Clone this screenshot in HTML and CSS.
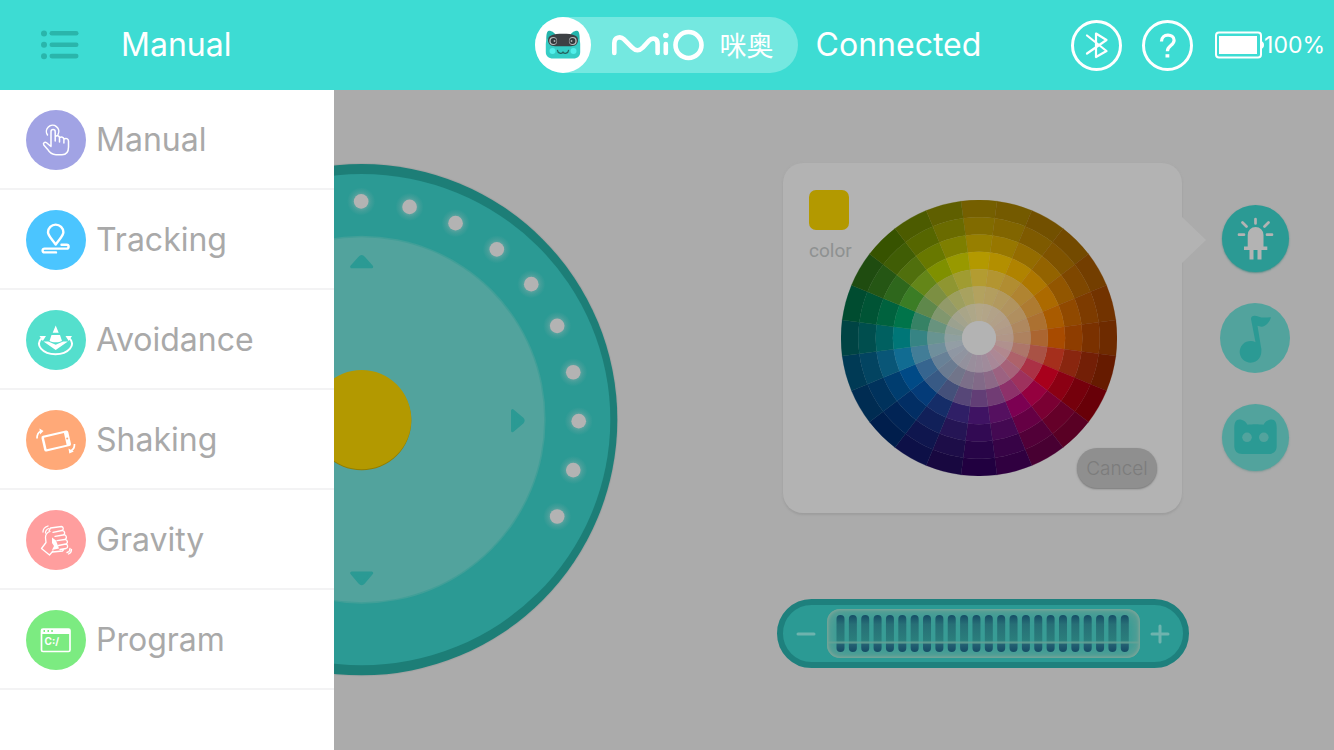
FILE: index.html
```html
<!DOCTYPE html>
<html lang="en">
<head>
<meta charset="utf-8">
<meta name="viewport" content="width=device-width, initial-scale=1">
<title>MiO Manual</title>
<link rel="stylesheet" href="styles.css">
</head>
<body>
<header class="topbar">
  <div class="topbar-left">
    <button class="icon-btn menu-btn" type="button" aria-label="Menu">
      <svg width="38" height="30" viewBox="0 0 38 30"><g fill="#2ab5ab"><circle cx="3" cy="3.500" r="3"/><circle cx="3" cy="14.800" r="3"/><circle cx="3" cy="26.200" r="3"/><rect x="8.500" y="1" width="29" height="4.600" rx="2.300"/><rect x="8.500" y="12.400" width="29" height="4.600" rx="2.300"/><rect x="8.500" y="23.800" width="29" height="4.600" rx="2.300"/></g></svg>
    </button>
    <h1 class="title">Manual</h1>
  </div>
  <div class="brand">
    <span class="brand-face">
      <svg width="36" height="30" viewBox="0 0 36 30">
        <path d="M1.500 13C1 6 1.500 1 4 .8 7 .8 10 3 11 6ZM34.500 13C35 6 34.500 1 32 .8 29 .8 26 3 25 6Z" fill="#25b5ac"/>
        <path d="M.8 14C.8 9 4 6.500 9 6.500h18c5 0 8.200 2.500 8.200 7.500v8c0 4-2.500 6.500-7 6.500H8C3.500 28.500.8 26 .8 22Z" fill="#35cdc5"/>
        <path d="M3 10C3 5.500 8 3.800 18 3.800S33 5.500 33 10s-3 6.200-7 6.200H10C6 16.200 3 14.500 3 10Z" fill="#3d4144"/>
        <circle cx="8.200" cy="11" r="3.900" fill="#b9bcbc"/><circle cx="27.800" cy="11" r="3.900" fill="#b9bcbc"/>
        <circle cx="8.600" cy="11" r="3" fill="#33383b"/><circle cx="27.400" cy="11" r="3" fill="#33383b"/>
        <circle cx="9.500" cy="11" r=".9" fill="#aeb6b6"/><circle cx="26.500" cy="11" r=".9" fill="#aeb6b6"/>
        <circle cx="7.500" cy="21" r="3" fill="#52efeb"/><circle cx="28.500" cy="21" r="3" fill="#52efeb"/>
        <path d="M12.500 20.500c.3 2.800 4 3.800 5.500 1.600 1.500 2.200 5.200 1.200 5.500-1.600" fill="none" stroke="#26625f" stroke-width="1.300" stroke-linecap="round"/>
      </svg>
    </span>
    <svg class="brand-word" role="img" aria-label="MiO" width="94" height="32" viewBox="0 0 94 32"><g fill="none" stroke="#fff" stroke-width="4.600" stroke-linecap="round"><path d="M3.300 24V14c0-5.800 6.200-7.200 9.500-3.800l8.200 8.200c4 4 7 4 11 0l6-6.600c3.400-3.800 8.600-2.500 8.600 3V24"/><path d="M54.800 15v9"/><circle cx="77.500" cy="16" r="13"/></g><circle cx="54.800" cy="6.500" r="2.800" fill="#fff"/></svg>
    <span class="brand-cn" lang="zh">咪奥</span>
  </div>
  <span class="status">Connected</span>
  <div class="topbar-right">
    <button class="icon-btn" type="button" aria-label="Bluetooth">
      <svg width="51" height="51" viewBox="0 0 51 51" fill="none" stroke="#fff"><circle cx="25.500" cy="25.500" r="24" stroke-width="3"/><path d="M16 15.500 35.500 31 25 37V13.500L35.500 20 16 33.500" stroke-width="2.200" stroke-linecap="round" stroke-linejoin="round"/></svg>
    </button>
    <button class="icon-btn" type="button" aria-label="Help">
      <svg width="51" height="51" viewBox="0 0 51 51" fill="none" stroke="#fff"><circle cx="25.500" cy="25.500" r="24" stroke-width="3"/><path d="M19.500 21.500c0-8.500 12.600-8.200 12.600-1.300 0 5.300-6.700 5.500-6.700 11" stroke-width="3.200"/><path d="M23.500 34.200h3.800v3.300h-3.800z" fill="#fff" stroke="none"/></svg>
    </button>
    <div class="battery">
      <svg width="49" height="28" viewBox="0 0 49 28"><rect x="1" y="1.500" width="45" height="25" rx="3" fill="none" stroke="#fff" stroke-width="2"/><rect x="4" y="5" width="38" height="18" fill="#fff"/><path d="M46 10c4 .5 4 7.500 0 8z" fill="#fff"/></svg>
      <span>100%</span>
    </div>
  </div>
</header>
<main class="main">
  <section class="stage">
    <div class="dial-col">
      <svg class="dial" viewBox="-256 -256 512 512" role="img" aria-label="Direction dial">
        <defs><radialGradient id="glow"><stop offset=".45" stop-color="#b3b3b3" stop-opacity=".4"/><stop offset=".7" stop-color="#b3b3b3" stop-opacity=".16"/><stop offset="1" stop-color="#b3b3b3" stop-opacity="0"/></radialGradient></defs>
        <circle r="256" fill="#999b9b" opacity=".5"/>
        <circle r="255" fill="#1d7e77"/>
        <ellipse rx="248" ry="245" fill="#2b9a94"/>
        <circle r="183.500" fill="#419f98"/>
        <circle r="182" fill="#52a39d"/>
        <g id="leds"></g>
        <g fill="#2b9a94" stroke="#2b9a94" stroke-width="3" stroke-linejoin="round"><path d="M-10-152.500H10L2-161.500Q0-164-2-161.500Z"/><path d="M-10 153H10L2 162.500Q0 165-2 162.500Z"/><path d="M150.500-9V11L160 3Q162 1 160-1Z"/></g>
        <circle cy="1" r="49.500" fill="#927e00"/><circle r="49.500" fill="#b39900"/>
      </svg>
    </div>
    <div class="controls">
      <div class="light-row">
        <div class="panel">
          <div class="swatch-box"><span class="swatch"></span><span class="swatch-label">color</span></div>
          <svg class="wheel" id="wheel" width="276" height="276" viewBox="-138 -138 276 276" role="img" aria-label="Color wheel"></svg>
          <button class="cancel" type="button">Cancel</button>
        </div>
        <div class="modes">
          <button class="mode mode-on" type="button" aria-label="Light">
            <svg width="67" height="67" viewBox="0 0 67 67"><path d="M25.700 41.500V30a7.900 8 0 0 1 15.800 0v11.500h3.800V45H39.500v9.500h-4V45h-4v9.500h-4V45H22v-3.500z" fill="#b3b3b3"/><path d="M33.500 14v4.500M20.500 17.500l4 4M46.500 17.500l-4 4M17 29.700h5M45 29.700h5" stroke="#b3b3b3" stroke-width="2.700" stroke-linecap="round"/></svg>
          </button>
          <button class="mode mode-lg" type="button" aria-label="Music">
            <svg width="70" height="70" viewBox="0 0 70 70"><path d="M31 16c0-4 4-4 8-2.200 4 1.600 8 .3 12 .4-1 4-5 9.500-9.500 9.500-2 0-2.800-.9-4-.9L40.800 43c.6 2 .8 4 .5 6A10.800 10.800 0 1 1 35.500 39.300Z" fill="#2b9a94"/></svg>
          </button>
          <button class="mode" type="button" aria-label="Expression">
            <svg width="67" height="67" viewBox="0 0 67 67"><path d="M12.300 26C12 19 13.500 15.500 17.500 15.500 21 15.500 24 18 25.500 20.700 30 20 37 20 41.500 20.700 43 18 46 15.500 49.500 15.500 53.500 15.500 55 19 54.700 26V42c0 5-3 8-8 8H20.300c-5 0-8-3-8-8z" fill="#2b9a94"/><circle cx="25" cy="33.300" r="4.800" fill="#52a39d"/><circle cx="41.800" cy="33.300" r="4.800" fill="#52a39d"/></svg>
          </button>
        </div>
      </div>
      <div class="speed">
        <button class="step" type="button" aria-label="Decrease"><svg width="20" height="20" viewBox="0 0 20 20"><path d="M2 10h16" stroke="#6eb3ae" stroke-width="3" stroke-linecap="round"/></svg></button>
        <div class="roller">
          <svg width="313" height="49" viewBox="0 0 313 49">
            <defs><linearGradient id="slot" x2="0" y2="1"><stop stop-color="#164d66"/><stop offset=".25" stop-color="#276f76"/><stop offset=".68" stop-color="#2a7e7c"/><stop offset=".74" stop-color="#3d8c86"/><stop offset=".8" stop-color="#235f72"/><stop offset="1" stop-color="#164d66"/></linearGradient></defs>
            <g id="slots"></g>
            <path d="M1 33.500h311" stroke="#6da397" stroke-width="2" opacity=".7"/>
          </svg>
          <input class="roller-input" type="range" min="0" max="100" aria-label="Speed">
        </div>
        <button class="step" type="button" aria-label="Increase"><svg width="20" height="20" viewBox="0 0 20 20"><path d="M2 10h16M10 2v16" stroke="#6eb3ae" stroke-width="3" stroke-linecap="round"/></svg></button>
      </div>
    </div>
  </section>
  <nav class="drawer" aria-label="Modes">
    <a class="item" href="#manual">
      <svg class="badge" viewBox="0 0 60 60"><circle cx="30" cy="30" r="30" fill="#a1a3e4"/><g fill="none" stroke="#fff" stroke-width="1.500" stroke-linecap="round" stroke-linejoin="round"><path d="M21.500 25a6.200 6.200 0 1 1 10.500-.5"/><path d="M25 36V21.700a2 2 0 0 1 4.200 0V31M29.200 26.500c1.500-1.500 4.300-.8 4.300 1.500v4M33.500 27.700c1.700-1.300 4.400-.6 4.400 1.500V33M37.900 29c2-1.300 4.600-.3 4.600 2v6c0 5-2.500 7.700-6.500 7.700h-6c-4 0-6.500-2-8.500-5.500L17.800 35c-1.200-2.300 1.200-3.600 2.800-2.200L25 36.500"/></g></svg>
      <span>Manual</span></a>
    <a class="item" href="#tracking">
      <svg class="badge" viewBox="0 0 60 60"><circle cx="30" cy="30" r="30" fill="#4bc5ff"/><g fill="none" stroke="#fff" stroke-width="2.400" stroke-linecap="round" stroke-linejoin="round"><path d="M29.700 34.500C25 28 22 25.500 22 22.300a7.700 7.700 0 0 1 15.400 0c0 3.200-3 5.700-7.700 12.200Z"/><path d="M35.500 34.800h5.200a1.900 1.900 0 0 1 0 3.800H18.500a1.900 1.900 0 0 0 0 3.800H30"/></g></svg>
      <span>Tracking</span></a>
    <a class="item" href="#avoidance">
      <svg class="badge" viewBox="0 0 60 60"><circle cx="30" cy="30" r="30" fill="#54dfcd"/><path d="M29.700 15.500l3 7.300h-6zM25.500 25h8.500l2 6c-3 1.800-9.500 1.800-12.500 0zM17.500 31.500h4.800l7.400 3.200 7.400-3.200h4.800L29.700 40z" fill="#fff"/><path d="M15.500 28.500c-7 6 1 15.700 14 15.700s21-9.700 14-15.700" fill="none" stroke="#fff" stroke-width="2"/><path d="M13.500 26h6.500l-3.200 5zM46 26h-6.500l3.200 5z" fill="#fff"/></svg>
      <span>Avoidance</span></a>
    <a class="item" href="#shaking">
      <svg class="badge" viewBox="0 0 60 60"><circle cx="30" cy="30" r="30" fill="#ffa978"/><g transform="rotate(-13 30 31)"><rect x="16.500" y="23" width="27.500" height="16" rx="2" fill="#fff"/><rect x="19" y="25" width="20.500" height="12" fill="#ffa978"/><circle cx="41.500" cy="31" r="1" fill="#ffa978"/></g><path d="M11 28.500c0-4 1-6 3.500-7M48.500 34c0 4-1 5-3.500 7" fill="none" stroke="#fff" stroke-width="1.700"/><path d="M13.500 18.500l4 2.500-3.500 3.500zM42.500 38.500l.8 5 4.500-2z" fill="#fff"/></svg>
      <span>Shaking</span></a>
    <a class="item" href="#gravity">
      <svg class="badge" viewBox="0 0 60 60"><circle cx="30" cy="30" r="30" fill="#ff9e9e"/><g fill="none" stroke="#fff" stroke-width="1.300" stroke-linecap="round" stroke-linejoin="round"><path d="M17 22c0-3 2-5 5-6M19.500 23c0-2.500 1-3.700 3.500-4.500M41 42.500c2-.5 3-2 3-4M42.500 44c2-.8 3-2 3-4.500"/><path d="M24 21.500c-3 1-4.500 3-4.500 6l.5 5-4.500 6 8 6.500 3.500-4"/><path d="M23 21l1.500-3 11-1.500c2 .3 2.500 3 .5 4l-9 1.800M35.500 20.700c3-.7 4.500 3.300 1.500 4.300l-8 1.300M37.500 25c3-.5 4 3.500 1.200 4.500l-7.700 1.200M38.700 29.700c3-.3 3.700 3.500 1 4.300l-7.200 1.500M39.500 34.200c2.500 0 3 3.500.5 4.300l-6 1M38 39l-1.500 2-10 1"/></g><path d="M26 27.500l4 3 3 8-7 1.500 2-4-2-3z" fill="#fff"/></svg>
      <span>Gravity</span></a>
    <a class="item" href="#program">
      <svg class="badge" viewBox="0 0 60 60"><circle cx="30" cy="30" r="30" fill="#7ceb81"/><rect x="15.500" y="19" width="28.500" height="22.500" rx="1.500" fill="none" stroke="#fff" stroke-width="1.700"/><path d="M15.500 19h28.500v5H15.500z" fill="#fff"/><path d="M17.500 20h1.500v2h-1.500zM21.500 20h1.500v2h-1.500zM25.300 20h1.500v2h-1.500z" fill="#7ceb81"/><text class="prompt" x="18.500" y="35">C:/</text></svg>
      <span>Program</span></a>
  </nav>
</main>
<script src="script.js"></script>
</body>
</html>
```
FILE: styles.css
```css
* { box-sizing: border-box; }
body {
  margin: 0;
  min-height: 100vh;
  display: flex;
  flex-direction: column;
  background: #ababab;
  font-family: Inter, "Liberation Sans", "Noto Sans CJK SC", sans-serif;
}
button { border: 0; padding: 0; background: none; font: inherit; cursor: pointer; }
svg { display: block; flex: none; }

.topbar {
  display: flex;
  align-items: center;
  height: 90px;
  background: #3ddcd3;
  color: #fff;
}
.topbar-left { flex: none; display: flex; align-items: center; gap: 42px; width: 40%; padding-left: 41px; }
.title, .status { margin: 0; font-size: 32px; line-height: 40px; font-weight: 400; }
.status { margin-left: 18px; }
.brand {
  display: flex;
  align-items: center;
  flex: none;
  height: 56px;
  margin-left: 1px;
  padding-right: 24px;
  border-radius: 28px;
  background: #74e8e0;
}
.brand-face {
  display: grid;
  place-items: center;
  width: 56px;
  height: 56px;
  margin-right: 20px;
  border-radius: 50%;
  background: #fff;
}
.brand-cn { margin-left: 15px; font: 400 27px/40px "Noto Sans CJK SC", sans-serif; }
.topbar-right { display: flex; align-items: center; gap: 20px; margin-left: auto; padding-right: 9px; }
.icon-btn { flex: none; }
.battery { display: flex; align-items: center; padding-left: 2px; font-size: 23px; line-height: 28px; }

.main { position: relative; flex: 1; display: flex; }
.stage { flex: 1; display: grid; grid-template-columns: 54.2% 1fr; }
.dial-col { display: grid; place-items: center; }
.dial { width: 71%; }

.controls { padding: 73px 0 0 54px; }
.light-row { display: flex; gap: 38px; padding-left: 6px; }
.panel {
  position: relative;
  display: flex;
  align-items: flex-start;
  width: 399px;
  min-height: 350px;
  padding: 27px 26px 24px;
  border-radius: 20px;
  background: #b3b3b3;
  box-shadow: 0 2px 2px #9e9e9e, 0 0 2px #a8a8a8;
}
.panel::after {
  content: "";
  position: absolute;
  left: 100%;
  top: 54px;
  width: 24px;
  height: 46px;
  background: #b3b3b3;
  clip-path: polygon(0 0, 100% 50%, 0 100%);
}
.swatch-box { width: 40px; }
.swatch { display: block; height: 40px; border-radius: 7px; background: #b39900; }
.swatch-label { display: block; margin-top: 10px; font: 19px/22px Roboto, sans-serif; color: #8e9191; }
.wheel { margin: 10px 0 0 -8px; }
.cancel {
  position: absolute;
  right: 25px;
  bottom: 25px;
  width: 80px;
  height: 40px;
  border-radius: 20px;
  background: #8f8f8f;
  box-shadow: 0 1px 2px #777;
  color: #7c7c7c;
  font-size: 19px;
  font-weight: 300;
}
.modes { display: flex; flex-direction: column; align-items: center; gap: 31px; padding-top: 42px; }
.mode { width: 67px; height: 67px; border-radius: 50%; background: #52a39d; box-shadow: 0 1px 2px #7e9a97; }
.mode-on { background: #2b9a94; box-shadow: 0 1px 2px #528e89; }
.mode-lg { width: 70px; height: 70px; box-shadow: none; }

.speed {
  display: flex;
  align-items: center;
  justify-content: space-between;
  width: 412px;
  height: 69px;
  margin-top: 86px;
  padding: 0 13px;
  border: 6px solid #1e807d;
  border-radius: 35px;
  background: #2b9a94;
}
.roller {
  position: relative;
  border-radius: 13px;
  background: #389c95;
  box-shadow: inset 0 0 3px 1px #7fa69a, inset 0 0 14px 2px #6ea196;
}
.roller-input { position: absolute; inset: 0; width: 100%; height: 100%; margin: 0; opacity: 0; cursor: pointer; }

.drawer { position: absolute; left: 0; top: 0; bottom: 0; width: 25%; background: #fff; }
.item {
  display: flex;
  align-items: center;
  gap: 10px;
  height: 100px;
  padding: 2px 0 0 26px;
  border-bottom: 2px solid #f3f3f4;
  color: #a9a9a9;
  font-size: 32px;
  line-height: 40px;
  text-decoration: none;
}
.badge { width: 60px; height: 60px; }
.prompt { font: bold 10px Inter, sans-serif; fill: #fff; }
```
FILE: script.js
```js
const NS = "http://www.w3.org/2000/svg";

function add(parent, name, attrs) {
  const el = document.createElementNS(NS, name);
  for (const key in attrs) el.setAttribute(key, attrs[key]);
  parent.appendChild(el);
}

// Vivid ring and outermost ring, clockwise from the top.
const vivid = ["b39900","b38f00","b08300","ae7700","ac6a00","a95b00","a84b00","a52f1c","a8001c","95003f","7c0052","551060","3f1363","2f1f66","152d68","043b78","004a86","116c92","007677","00744a","3b7d25","648618","7f9000","989900"];
const outer = ["755f00","745a00","725000","734a00","733e00","723300","6e2b00","661b00","680008","590024","480032","300040","210040","180840","0d1047","001e4c","002c52","003a55","004444","004c30","1f4c10","375300","4c5b00","5f5f00"];

function mix(a, b, t) {
  const out = [0, 2, 4].map(i => Math.round(parseInt(a.substr(i, 2), 16) * (1 - t) + parseInt(b.substr(i, 2), 16) * t));
  return "rgb(" + out.join(",") + ")";
}
function point(r, deg) {
  const a = deg * Math.PI / 180;
  return (r * Math.sin(a)).toFixed(2) + " " + (-r * Math.cos(a)).toFixed(2);
}

const wheel = document.getElementById("wheel");
const inner = 17, width = (138 - inner) / 7;
vivid.forEach((color, i) => {
  const rings = [
    mix(outer[i], color, 0), mix(outer[i], color, .2), mix(outer[i], color, .55), mix(color, "b3b3b3", 0),
    mix(color, "b3a3a3", .3), mix(color, "b3a9a3", .58), mix(color, "b3aaaa", .8)
  ];
  rings.forEach((fill, k) => {
    const r1 = 138 - k * width, r0 = r1 - width;
    const from = i * 15 - 7.5, to = from + 15;
    add(wheel, "path", {
      d: `M${point(r0, from)}L${point(r1, from)}A${r1} ${r1} 0 0 1 ${point(r1, to)}L${point(r0, to)}A${r0} ${r0} 0 0 0 ${point(r0, from)}Z`,
      fill, stroke: fill, "stroke-width": .3
    });
  });
});
add(wheel, "circle", { r: inner, fill: "#b3b3b3" });

const leds = document.getElementById("leds");
for (let i = -9; i <= 9; i++) {
  const [x, y] = point(217, i * 90 / 7).split(" ").map(Number);
  const cx = x - 0.5, cy = y * 1.01 + 1.5;
  add(leds, "circle", { cx, cy, r: 14, fill: "url(#glow)" });
  add(leds, "circle", { cx, cy, r: 7.3, fill: "#b3b3b3" });
}

const slots = document.getElementById("slots");
for (let i = 0; i < 24; i++) {
  add(slots, "rect", { x: 9.5 + i * 12.36, y: 6, width: 8, height: 37, rx: 4, fill: "url(#slot)" });
}
```
